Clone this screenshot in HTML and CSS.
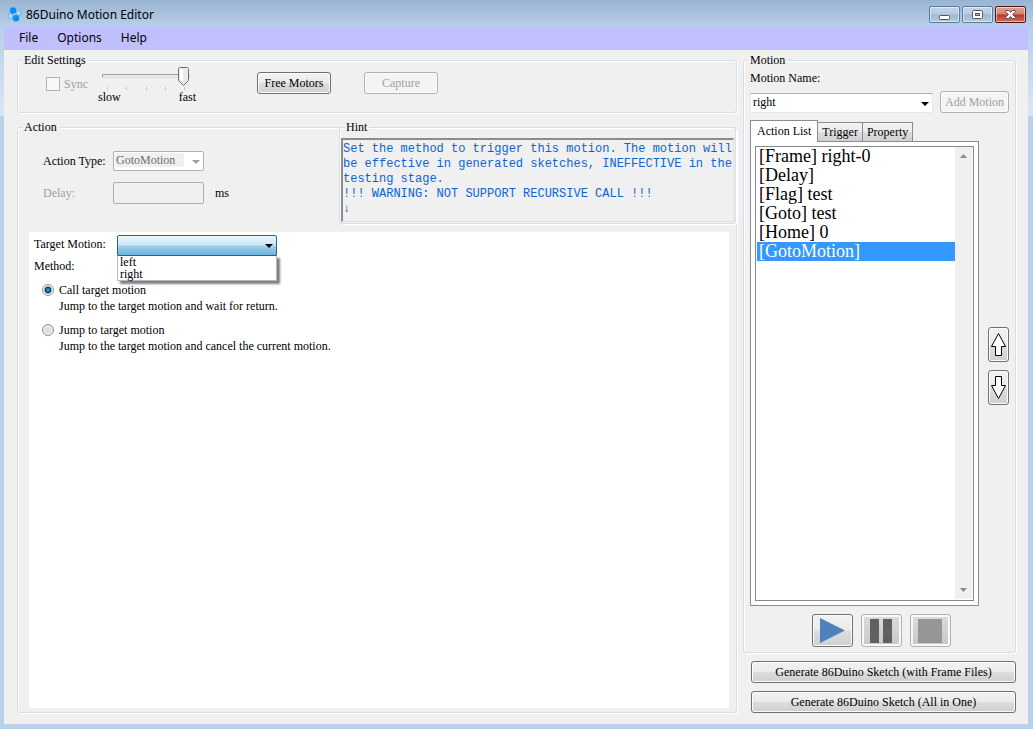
FILE: index.html
```html
<!DOCTYPE html>
<html lang="en">
<head>
    <meta charset="UTF-8">
    <meta name="viewport" content="width=device-width, initial-scale=1.0">
    <title>86Duino Motion Editor</title>
    <link rel="stylesheet" href="styles.css">
</head>
<body>
    <div class="window">
        <header class="titlebar">
            <svg class="app-icon" width="15" height="15" viewBox="0 0 15 15">
                <circle cx="3.5" cy="9" r="2.5" fill="#b5dcfa" stroke="#62b4f2"/>
                <circle cx="11.5" cy="6" r="2.5" fill="#b5dcfa" stroke="#62b4f2"/>
                <circle cx="6" cy="3.5" r="3.2" fill="#0a8cfa"/>
                <circle cx="9" cy="11.3" r="3.2" fill="#0a8cfa"/>
            </svg>
            <h1>86Duino Motion Editor</h1>
            <div class="window-buttons">
                <button type="button" class="win-btn" aria-label="Minimize">
                    <svg width="13" height="13" viewBox="0 0 13 13"><rect x="1.5" y="7.5" width="10" height="4" rx="1" fill="#fff" stroke="#535666"/></svg>
                </button>
                <button type="button" class="win-btn" aria-label="Maximize">
                    <svg width="13" height="13" viewBox="0 0 13 13"><rect x="1.5" y="2.5" width="10" height="8" rx="1" fill="#fff" stroke="#535666"/><rect x="4.5" y="5.5" width="4" height="2" fill="#a9c2dc" stroke="#535666"/></svg>
                </button>
                <button type="button" class="win-btn close" aria-label="Close">
                    <svg width="13" height="13" viewBox="0 0 13 13"><path d="M1.5 2.5h3.2l1.8 2 1.8-2h3.2v1l-3 3 3 3v1H8.3l-1.8-2-1.8 2H1.5v-1l3-3-3-3z" fill="#fff" stroke="#535666"/></svg>
                </button>
            </div>
        </header>

        <nav class="menubar">
            <button type="button">File</button>
            <button type="button">Options</button>
            <button type="button">Help</button>
        </nav>

        <main class="client">
            <div class="left-column">
                <fieldset class="group settings">
                    <legend>Edit Settings</legend>
                    <label class="sync"><input type="checkbox" disabled> Sync</label>
                    <div class="speed">
                        <input type="range" min="0" max="4" value="4" aria-label="Speed">
                        <div class="ticks"><i></i><i></i><i></i><i></i><i></i></div>
                        <div class="speed-labels"><span>slow</span><span>fast</span></div>
                    </div>
                    <button type="button" class="btn free-btn">Free Motors</button>
                    <button type="button" class="btn capture-btn" disabled>Capture</button>
                </fieldset>

                <fieldset class="group action">
                    <legend>Action</legend>
                    <div class="action-top">
                        <div class="action-form">
                            <label for="actionType">Action Type:</label>
                            <div class="combo disabled">
                                <select id="actionType" disabled>
                                    <option>GotoMotion</option>
                                </select>
                            </div>
                            <span></span>
                            <label for="delay" class="muted">Delay:</label>
                            <input type="text" id="delay" disabled>
                            <span>ms</span>
                        </div>
                        <fieldset class="group hint">
                            <legend>Hint</legend>
                            <textarea readonly wrap="off" aria-label="Hint">Set the method to trigger this motion. The motion will
be effective in generated sketches, INEFFECTIVE in the
testing stage.
!!! WARNING: NOT SUPPORT RECURSIVE CALL !!!
↓</textarea>
                        </fieldset>
                    </div>

                    <div class="target-panel">
                        <div class="target-row">
                            <label for="targetMotion">Target Motion:</label>
                            <div class="combo open">
                                <select id="targetMotion">
                                    <option></option>
                                </select>
                                <ul class="dropdown" role="listbox" aria-label="Target motions">
                                    <li role="option">left</li>
                                    <li role="option">right</li>
                                </ul>
                            </div>
                        </div>
                        <div class="method-title">Method:</div>
                        <div class="method">
                            <input type="radio" name="method" id="call" checked>
                            <label for="call">Call target motion</label>
                            <p>Jump to the target motion and wait for return.</p>
                        </div>
                        <div class="method">
                            <input type="radio" name="method" id="jump">
                            <label for="jump">Jump to target motion</label>
                            <p>Jump to the target motion and cancel the current motion.</p>
                        </div>
                    </div>
                </fieldset>
            </div>

            <div class="right-column">
                <fieldset class="group motion">
                    <legend>Motion</legend>
                    <label for="motionName">Motion Name:</label>
                    <div class="name-row">
                        <div class="combo name">
                            <select id="motionName">
                                <option>right</option>
                                <option>left</option>
                            </select>
                        </div>
                        <button type="button" class="btn add-btn" disabled>Add Motion</button>
                    </div>

                    <div class="list-area">
                        <div class="tabs-box">
                            <div class="tabs" role="tablist">
                                <button type="button" role="tab" class="tab active" aria-selected="true">Action List</button>
                                <button type="button" role="tab" class="tab">Trigger</button>
                                <button type="button" role="tab" class="tab">Property</button>
                            </div>
                            <div class="tab-page">
                                <div class="list-box">
                                    <ul class="actions" role="listbox" aria-label="Action list">
                                        <li role="option">[Frame] right-0</li>
                                        <li role="option">[Delay]</li>
                                        <li role="option">[Flag] test</li>
                                        <li role="option">[Goto] test</li>
                                        <li role="option">[Home] 0</li>
                                        <li role="option" class="selected" aria-selected="true">[GotoMotion]</li>
                                    </ul>
                                    <div class="scrollbar">
                                        <svg width="7" height="4" viewBox="0 0 7 4"><path d="M0 4 3.5 0 7 4z" fill="#8b8b8b"/></svg>
                                        <svg width="7" height="4" viewBox="0 0 7 4"><path d="M0 0h7L3.5 4z" fill="#8b8b8b"/></svg>
                                    </div>
                                </div>
                            </div>
                        </div>
                        <div class="move-buttons">
                            <button type="button" class="btn" aria-label="Move up">
                                <svg width="17" height="25" viewBox="0 0 17 25"><path d="M8.5 1.5 15.5 14.5H11.5V23.5H5.5V14.5H1.5z" fill="#fff" stroke="#000"/></svg>
                            </button>
                            <button type="button" class="btn" aria-label="Move down">
                                <svg width="17" height="25" viewBox="0 0 17 25"><path d="M8.5 23.5 15.5 10.5H11.5V1.5H5.5V10.5H1.5z" fill="#fff" stroke="#000"/></svg>
                            </button>
                        </div>
                    </div>

                    <div class="player">
                        <button type="button" class="btn" aria-label="Play">
                            <svg width="25" height="25" viewBox="0 0 25 25"><path d="M0 0 25 12.5 0 25z" fill="#4f81bd"/></svg>
                        </button>
                        <button type="button" class="btn" aria-label="Pause" disabled>
                            <svg width="24" height="24" viewBox="0 0 24 24"><path d="M1 0h9v24H1zM14 0h9v24h-9z" fill="#606060"/></svg>
                        </button>
                        <button type="button" class="btn" aria-label="Stop" disabled>
                            <svg width="24" height="24" viewBox="0 0 24 24"><path d="M0 0h24v24H0z" fill="#969696"/></svg>
                        </button>
                    </div>
                </fieldset>
                <button type="button" class="btn generate">Generate 86Duino Sketch (with Frame Files)</button>
                <button type="button" class="btn generate">Generate 86Duino Sketch (All in One)</button>
            </div>
        </main>
    </div>
</body>
</html>
```
FILE: styles.css
```css
* {
    box-sizing: border-box;
}

body {
    margin: 0;
    font-family: "Liberation Serif", serif;
    font-size: 12px;
    line-height: 14px;
    color: #000;
}

button, input, select, textarea {
    font: inherit;
    color: inherit;
    margin: 0;
}

ul, p {
    margin: 0;
    padding: 0;
    list-style: none;
}

/* Window frame */
.window {
    display: flex;
    flex-direction: column;
    min-height: 100vh;
    padding: 0 5px 5px 4px;
    background: linear-gradient(#99b4d1 0, #b7cfe8 26px, #d9e6f5 116px, #b9d1ea 116px);
}

.titlebar {
    display: flex;
    align-items: center;
    height: 26px;
    padding: 3px 2px 0 3px;
}

.titlebar h1 {
    flex: 1;
    margin: 0 0 0 4px;
    font-family: "Noto Sans", sans-serif;
    font-size: 12px;
    font-weight: normal;
}

.window-buttons {
    display: flex;
    gap: 2px;
}

.win-btn {
    display: flex;
    align-items: center;
    justify-content: center;
    width: 31px;
    height: 17px;
    padding: 0;
    border: 1px solid #5f7a98;
    border-radius: 2px;
    background: linear-gradient(#c3d6ea 0, #b5cbe2 48%, #9db8d3 52%, #b4cde6 100%);
    box-shadow: inset 0 0 0 1px rgba(255, 255, 255, 0.5);
}

.win-btn.close {
    border-color: #4b1520;
    background: linear-gradient(#e2a293 0, #d28170 48%, #b83a22 52%, #d0705a 100%);
}

.menubar {
    display: flex;
    gap: 19px;
    height: 24px;
    padding: 0 15px;
    background: #c0c0ff;
}

.menubar button {
    padding: 0;
    border: none;
    background: none;
    font-family: "Noto Sans", sans-serif;
    font-size: 12px;
}

.client {
    flex: 1;
    display: flex;
    gap: 6px;
    padding: 3px 12px 11px 13px;
    background: #f0f0f0;
}

.left-column {
    flex: 1;
    display: flex;
    flex-direction: column;
    gap: 7px;
    min-width: 0;
}

.right-column {
    display: flex;
    flex-direction: column;
    width: 273px;
}

/* Group boxes */
.group {
    min-width: 0;
    margin: 0;
    padding: 0;
    border: 1px solid #d5dfe5;
    border-radius: 3px;
    box-shadow: 1px 1px 0 #fff, inset 1px 1px 0 #fff;
}

.group > legend {
    margin-left: 5px;
    padding: 0 2px 0 1px;
    background: #f0f0f0;
}

.muted {
    color: #a0a0a0;
}

/* Buttons */
.btn {
    display: flex;
    align-items: center;
    justify-content: center;
    height: 22px;
    padding: 0;
    border: 1px solid #707070;
    border-radius: 3px;
    background: linear-gradient(#f2f2f2 0, #ebebeb 48%, #dddddd 52%, #cfcfcf 100%);
    box-shadow: inset 0 0 0 1px #fcfcfc;
}

.btn:disabled {
    border-color: #adb2b5;
    background: #f4f4f4;
    color: #a0a0a0;
}

/* Edit settings */
.settings {
    display: flex;
    align-items: flex-start;
    height: 60px;
    padding-left: 28px;
}

.settings > legend {
    margin-left: -23px;
}

.sync {
    display: flex;
    align-items: center;
    gap: 4px;
    width: 52px;
    margin-top: 10px;
    color: #a0a0a0;
}

.sync input {
    appearance: none;
    width: 14px;
    height: 14px;
    border: 1px solid #b1b1b1;
    background: #f8f8f8;
}

.speed {
    width: 98px;
}

.speed input {
    appearance: none;
    display: block;
    width: 88px;
    height: 18px;
    margin-left: 4px;
    background: none;
}

.speed input::-webkit-slider-runnable-track {
    height: 4px;
    border: 1px solid #e0e0e0;
    border-top-color: #a0a0a0;
    border-left-color: #a0a0a0;
    background: #e7eaea;
}

.speed input::-webkit-slider-thumb {
    appearance: none;
    width: 11px;
    height: 19px;
    margin-top: -8px;
    background: url("data:image/svg+xml,%3Csvg xmlns='http://www.w3.org/2000/svg' width='11' height='19'%3E%3Cpath d='M1.5.5h8l1 1v12l-5 5-5-5v-12z' fill='%23eaeaea' stroke='%23707070'/%3E%3Cpath d='M2 2h3v13L2 12z' fill='%23fff'/%3E%3C/svg%3E") no-repeat;
}

.ticks {
    display: flex;
    justify-content: space-between;
    width: 78px;
    margin: 2px 0 0 9px;
}

.ticks i {
    width: 1px;
    height: 3px;
    background: #c4c4c4;
}

.speed-labels {
    display: flex;
    justify-content: space-between;
}

.free-btn {
    width: 74px;
    margin: 5px 0 0 61px;
}

.capture-btn {
    width: 74px;
    margin: 5px 0 0 33px;
}

/* Drop-downs */
.combo {
    position: relative;
}

.combo select {
    appearance: none;
    display: block;
    width: 100%;
    height: 20px;
    padding: 0 20px 2px 2px;
    border: 1px solid #e3e9ef;
    border-top-color: #abadb3;
    border-radius: 0;
    background: #fff;
    outline: none;
}

.combo::after {
    content: "";
    position: absolute;
    top: 9px;
    right: 4px;
    border: 4px solid transparent;
    border-top-color: #000;
    border-bottom: none;
    pointer-events: none;
}

.combo.name::after {
    top: 11px;
}

.combo.disabled select {
    border: 1px solid #afafaf;
    border-radius: 2px;
    background: linear-gradient(#f0f0f0, #f0f0f0) 1px 1px / 69px 14px no-repeat #fff;
    color: #6d6d6d;
    opacity: 1;
}

.combo.disabled::after {
    border-top-color: #a0a0a0;
}

.combo.open select {
    height: 21px;
    border: 1px solid #2c628b;
    border-radius: 2px;
    background: linear-gradient(#eaf6fd 0, #cbe6f5 48%, #a2d2ec 52%, #68b3db 100%);
}

.dropdown {
    position: absolute;
    top: 20px;
    left: 0;
    right: 0;
    border: 1px solid #b8b8c8;
    border-top-color: #2c628b;
    background: #fff;
    box-shadow: 3px 3px 2px rgba(0, 0, 0, 0.5);
    line-height: 12px;
}

.dropdown li {
    padding-left: 2px;
}

/* Action */
.action {
    flex: 1;
    display: flex;
    flex-direction: column;
}

.action-top {
    display: flex;
    justify-content: space-between;
    height: 90px;
    margin: 0 0 8px 25px;
}

.action-form {
    display: grid;
    grid-template-columns: 59px 91px auto;
    grid-auto-rows: 22px;
    gap: 10px 11px;
    align-content: start;
    align-items: center;
    padding-top: 16px;
    white-space: nowrap;
}

.action-form .combo,
.action-form #delay {
    justify-self: end;
    width: 91px;
}

.action-form #delay {
    height: 22px;
    border: 1px solid #afafaf;
    border-radius: 2px;
    background: #f0f0f0;
}

.hint {
    display: flex;
    width: 397px;
    height: 104px;
    margin-top: -14px;
}

.hint textarea {
    flex: 1;
    min-width: 0;
    margin: 4px 1px 1px;
    padding: 2px 0 0;
    border: 1px solid #e3e3e3;
    border-top: 2px solid #8c8c8c;
    border-left: 2px solid #8c8c8c;
    background: #f0f0f0;
    color: #0a64d2;
    font-family: "Liberation Mono", monospace;
    line-height: 15px;
    overflow: hidden;
    resize: none;
    outline: none;
}

.target-panel {
    flex: 1;
    margin: 0 7px 4px 11px;
    padding: 3px 5px;
    background: #fff;
}

.target-row {
    display: flex;
}

.target-row label {
    width: 83px;
    padding-top: 2px;
}

.target-row .combo {
    width: 160px;
}

.method-title {
    margin: 3px 0 10px;
}

.method {
    display: grid;
    grid-template-columns: 12px 1fr;
    column-gap: 5px;
    row-gap: 2px;
    margin: 0 0 10px 8px;
}

.method input {
    appearance: none;
    width: 12px;
    height: 12px;
    margin-top: 1px;
    border: 1px solid #8e8f8f;
    border-radius: 50%;
    background: radial-gradient(#d8d8d8, #f4f4f4);
}

.method input:checked {
    background: radial-gradient(circle, #3fb5f0 0, #10618f 2px, #0b3c5e 3px, #f4f4f4 4px);
}

.method p {
    grid-column: 2;
}

/* Motion */
.motion {
    flex: 1;
    display: flex;
    flex-direction: column;
    padding: 0 6px 5px;
}

.motion > legend {
    margin-left: -1px;
}

.motion > label {
    margin: 4px 0 6px;
}

.name-row {
    display: flex;
    gap: 7px;
}

.name {
    flex: 1;
    padding-top: 2px;
}

.add-btn {
    width: 69px;
}

.list-area {
    flex: 1;
    display: flex;
    gap: 9px;
    margin-top: 7px;
}

.tabs-box {
    flex: 1;
    display: flex;
    flex-direction: column;
}

.tabs {
    display: flex;
    align-items: flex-end;
}

.tab {
    height: 19px;
    margin-left: -1px;
    padding: 0 4px;
    border: 1px solid #898c95;
    border-bottom: none;
    background: linear-gradient(#f2f2f2 0, #ebebeb 48%, #dddddd 52%, #d0d0d0 100%);
}

.tab.active {
    position: relative;
    height: 22px;
    margin: 0 0 -1px;
    padding: 0 6px 2px;
    background: #fff;
}

.tab-page {
    flex: 1;
    display: flex;
    padding: 4px;
    border: 1px solid #898c95;
    background: #fff;
}

.list-box {
    flex: 1;
    display: flex;
    padding: 0 1px 1px;
    border: 1px solid #828790;
}

.actions {
    flex: 1;
    font-size: 18px;
    line-height: 19px;
}

.actions li {
    padding-left: 2px;
}

.actions .selected {
    background: #3399ff;
    color: #fff;
}

.scrollbar {
    display: flex;
    flex-direction: column;
    align-items: center;
    justify-content: space-between;
    width: 17px;
    padding: 7px 0;
    background: #f0f0f0;
}

.move-buttons {
    display: flex;
    flex-direction: column;
    justify-content: center;
    gap: 8px;
    padding-top: 6px;
}

.move-buttons .btn {
    width: 21px;
    height: 35px;
}

.player {
    display: flex;
    justify-content: center;
    gap: 8px;
    margin: 8px 0 0 3px;
}

.player .btn {
    width: 41px;
    height: 33px;
}

.player .btn:disabled {
    background: linear-gradient(#dcdcdc, #c8c8c8);
    box-shadow: inset 0 0 0 2px #f8f8f8;
}

.generate {
    margin: 8px 0 0 8px;
}
```
